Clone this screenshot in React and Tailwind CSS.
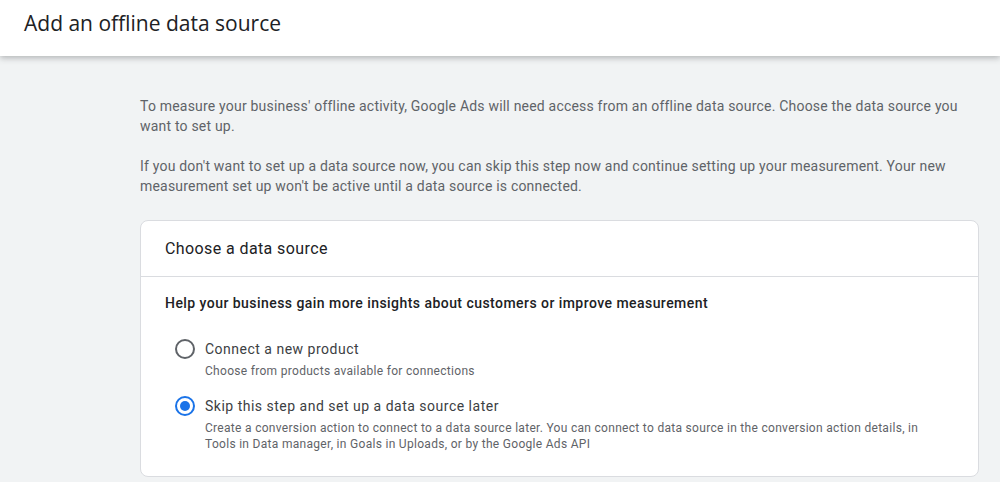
export default function App() {
  return (
    <div className="min-h-[482px] bg-[#f1f3f4] font-['Roboto',sans-serif]">
      <header className="relative z-10 flex h-14 items-start bg-white pl-6 pt-[9px] shadow-[0_2px_6px_rgba(60,64,67,0.35)]">
        <h1 className="font-['Open_Sans',sans-serif] text-[21px] leading-7 text-[#202124]">
          Add an offline data source
        </h1>
      </header>
      <main className="pl-[140px] pr-[21px] pt-10">
        <p className="text-[14px] leading-5 tracking-[0.2px] text-[#5f6368]">
          To measure your business' offline activity, Google Ads will need access from an offline data source. Choose the data source you want to set up.
        </p>
        <p className="mt-5 text-[14px] leading-5 tracking-[0.2px] text-[#5f6368]">
          If you don't want to set up a data source now, you can skip this step now and continue setting up your measurement. Your new measurement set up won't be active until a data source is connected.
        </p>
        <section className="mt-6 rounded-lg border border-[#dadce0] bg-white">
          <div className="flex h-14 items-center border-b border-[#dadce0] px-6">
            <h2 className="text-[16px] leading-6 tracking-[0.4px] text-[#202124]">Choose a data source</h2>
          </div>
          <div className="px-6 pb-6 pt-4">
            <p className="text-[14px] font-medium leading-5 tracking-[0.45px] text-[#202124]">
              Help your business gain more insights about customers or improve measurement
            </p>
            <div className="mt-[26px] flex flex-col gap-[17px] pl-[10px]">
              <label className="flex items-start gap-[10px]">
                <span className="flex h-5 w-5 shrink-0 items-center justify-center rounded-full border-2 border-[#5f6368]" />
                <span className="flex flex-col">
                  <span className="text-[14px] leading-5 tracking-[0.5px] text-[#3c4043]">Connect a new product</span>
                  <span className="mt-1 text-[12px] leading-4 tracking-[0.3px] text-[#5f6368]">Choose from products available for connections</span>
                </span>
              </label>
              <label className="flex items-start gap-[10px]">
                <span className="flex h-5 w-5 shrink-0 items-center justify-center rounded-full border-2 border-[#1a73e8]">
                  <span className="h-[10px] w-[10px] rounded-full bg-[#1a73e8]" />
                </span>
                <span className="flex flex-col">
                  <span className="text-[14px] leading-5 tracking-[0.5px] text-[#3c4043]">Skip this step and set up a data source later</span>
                  <span className="mt-1 max-w-[740px] text-[12px] leading-4 tracking-[0.3px] text-[#5f6368]">
                    Create a conversion action to connect to a data source later. You can connect to data source in the conversion action details, in Tools in Data manager, in Goals in Uploads, or by the Google Ads API
                  </span>
                </span>
              </label>
            </div>
          </div>
        </section>
      </main>
    </div>
  );
}
